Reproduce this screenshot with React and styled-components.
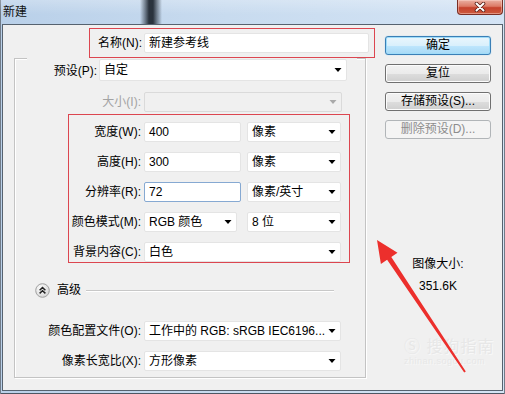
import React from 'react';
import styled, { createGlobalStyle, css } from 'styled-components';

const FONT = `"Liberation Sans", "Noto Sans CJK SC", sans-serif`;

const Global = createGlobalStyle`
  html, body { margin: 0; padding: 0; background: #c9dcf0; }
  #root { width: 505px; height: 394px; overflow: hidden; }
  * { box-sizing: border-box; }
`;

const Window = styled.div`
  position: relative;
  width: 505px;
  height: 394px;
  display: flex;
  flex-direction: column;
  padding: 0 2px 3px 2px;
  background: linear-gradient(90deg, #b9d0e9 0%, #c8dbef 45%, #d4e4f5 100%);
  box-shadow: inset 1px 0 0 #707b88, inset -1px 0 0 #707b88, inset 0 -1px 0 #4d5763;
  font-family: ${FONT};
  font-size: 12px;
  color: #000;
`;

const TitleBar = styled.div`
  height: 24px;
  margin: 0 -2px;
  padding: 0 2px 0 3px;
  display: flex;
  align-items: flex-start;
  justify-content: space-between;
  background:
    linear-gradient(90deg, transparent 140px, rgba(45, 55, 66, 0.55) 145px, #2a333d 149px, #2a333d 153px, rgba(45, 55, 66, 0.55) 157px, transparent 162px),
    linear-gradient(180deg, rgba(255, 255, 255, 0.25), rgba(255, 255, 255, 0) 60%);
`;

const Title = styled.div`
  line-height: 24px;
  font-size: 12px;
  color: #111;
`;

const CloseButton = styled.div`
  width: 46px;
  height: 15px;
  display: flex;
  align-items: center;
  justify-content: center;
  border: 1px solid #7a2e24;
  border-top: none;
  border-radius: 0 0 4px 4px;
  background: linear-gradient(180deg, #eab0a2 0%, #dc7a66 45%, #c6422d 55%, #cc5a3e 100%);
  box-shadow: inset 0 0 0 1px rgba(255, 220, 210, 0.45);
`;

const Body = styled.div`
  flex: 1;
  display: flex;
  align-items: flex-start;
  border: 1px solid #56626f;
  background: #f0f0f0;
`;

const LeftCol = styled.div`
  width: 372px;
  display: flex;
  flex-direction: column;
`;

const HighlightBox = styled.div`
  border: 1px solid #dc4650;
`;

const NameBox = styled(HighlightBox)`
  margin: 3px 0 0 86px;
  width: 286px;
  height: 30px;
  display: flex;
  align-items: center;
`;

const Label = styled.div`
  width: ${(p) => p.$w}px;
  flex: none;
  text-align: right;
  white-space: nowrap;
  line-height: 20px;
  color: ${(p) => (p.$disabled ? '#a3a3a3' : '#000')};
`;

const fieldBase = css`
  height: ${(p) => p.$h || 20}px;
  width: ${(p) => p.$w}px;
  flex: none;
  background: ${(p) => (p.$disabled ? '#f0f0f0' : '#fff')};
  border: 1px solid ${(p) => (p.$focused ? '#86a9d2' : p.$disabled ? '#dadada' : '#e4e4e4')};
  border-radius: 2px;
  padding: 0 4px 0 4px;
  line-height: ${(p) => (p.$h || 20) - 2}px;
  white-space: nowrap;
`;

const Input = styled.div`
  ${fieldBase}
  margin-left: ${(p) => p.$ml || 0}px;
`;

const SelectBox = styled.div`
  ${fieldBase}
  display: flex;
  align-items: center;
  justify-content: space-between;
`;

const Caret = styled.svg`
  flex: none;
`;

const Select = ({ children, w, h, disabled }) => (
  <SelectBox $w={w} $h={h} $disabled={disabled}>
    <span>{children}</span>
    <Caret width="8" height="4" viewBox="0 0 8 4">
      <polygon points="0.5,0 7.5,0 4,4" fill={disabled ? '#a9a9a9' : '#000'} />
    </Caret>
  </SelectBox>
);

const GroupBox = styled.div`
  margin-left: 11px;
  width: 352px;
  height: 320px;
  display: flex;
  flex-direction: column;
  border: 1px solid #c3c3c3;
  box-shadow: inset 1px 1px 0 #fff, 1px 1px 0 #fff;
`;

const PresetRow = styled.div`
  margin: -1px 0 0 12px;
  width: 330px;
  height: 23px;
  display: flex;
  align-items: flex-end;
  gap: 2px;
  background: #f0f0f0;
`;

const Row = styled.div`
  display: flex;
  align-items: center;
  gap: 3px;
  margin-top: ${(p) => p.$mt || 0}px;
`;

const ParamBox = styled(HighlightBox)`
  margin: 2px 0 0 53px;
  width: 282px;
  height: 149px;
  padding-top: 7px;
  display: flex;
  flex-direction: column;
  gap: 10px;
`;

const Pair = styled.div`
  display: flex;
  gap: ${(p) => p.$gap || 6}px;
`;

const AdvancedRow = styled.div`
  margin-top: 20px;
  height: 15px;
  padding-left: 20px;
  padding-right: 31px;
  display: flex;
  align-items: center;
`;

const AdvancedText = styled.span`
  margin-left: 7px;
  line-height: 15px;
`;

const Rule = styled.div`
  flex: 1;
  margin-left: 5px;
  height: 2px;
  border-top: 1px solid #c8c8c8;
  border-bottom: 1px solid #fff;
`;

const RightCol = styled.div`
  margin-left: 10px;
  width: 106px;
  padding-top: 11px;
  display: flex;
  flex-direction: column;
  gap: 9px;
`;

const Button = styled.div`
  height: 19px;
  border-radius: 3px;
  text-align: center;
  line-height: 17px;
  white-space: nowrap;
  ${(p) =>
    p.$variant === 'default'
      ? css`
          border: 1px solid #3a7fb6;
          background: linear-gradient(180deg, #eaf6fd 0%, #d9f0fc 50%, #bee6fd 52%, #a7d9f5 100%);
          box-shadow: inset 0 0 0 1px #9fdcf9, 0 0 1px #6fc2ee;
        `
      : p.$variant === 'disabled'
      ? css`
          border: 1px solid #b1b5b8;
          background: #f4f4f4;
          color: #8d8d8d;
        `
      : css`
          border: 1px solid #707070;
          background: linear-gradient(180deg, #f2f2f2 0%, #ebebeb 50%, #dddddd 52%, #cfcfcf 100%);
          box-shadow: inset 0 0 0 1px #fcfcfc;
        `}
`;

const SizeTitle = styled.div`
  margin-top: 109px;
  text-align: center;
  line-height: 14px;
`;

const SizeValue = styled.div`
  margin-top: -1px;
  text-align: center;
  line-height: 14px;
`;

const ArrowOverlay = styled.svg`
  position: absolute;
  left: 0;
  top: 0;
  pointer-events: none;
`;

const Watermark = styled.div`
  position: absolute;
  left: 404px;
  top: 338px;
  display: flex;
  flex-direction: column;
  align-items: flex-start;
  color: #e7e7e7;
  text-shadow: 1px 1px 0 #f8f8f8;
  pointer-events: none;
`;

const WatermarkMain = styled.div`
  font-size: 16px;
  line-height: 18px;
  letter-spacing: 1px;
`;

const WatermarkSub = styled.div`
  font-size: 9px;
  line-height: 10px;
  letter-spacing: 0.5px;
`;

const AdvancedIcon = () => (
  <svg width="15" height="15" viewBox="0 0 15 15">
    <defs>
      <radialGradient id="advg" cx="0.4" cy="0.35" r="0.7">
        <stop offset="0" stopColor="#ffffff" />
        <stop offset="1" stopColor="#d4d4d4" />
      </radialGradient>
    </defs>
    <circle cx="7.5" cy="7.5" r="6.8" fill="url(#advg)" stroke="#a0a0a0" strokeWidth="1" />
    <path d="M4.6 7.2 L7.5 4.6 L10.4 7.2 M4.6 10.4 L7.5 7.8 L10.4 10.4" fill="none" stroke="#222" strokeWidth="1.5" />
  </svg>
);

export default function App() {
  return (
    <>
      <Global />
      <Window>
        <TitleBar>
          <Title>新建</Title>
          <CloseButton>
            <svg width="14" height="10" viewBox="0 0 14 10">
              <path d="M3.5 1.5 L10.5 8.5 M10.5 1.5 L3.5 8.5" stroke="#5a1f17" strokeWidth="3.6" strokeLinecap="round" />
              <path d="M3.5 1.5 L10.5 8.5 M10.5 1.5 L3.5 8.5" stroke="#fff" strokeWidth="2" strokeLinecap="round" />
            </svg>
          </CloseButton>
        </TitleBar>
        <Body>
          <LeftCol>
            <NameBox>
              <Label $w={52}>名称(N):</Label>
              <Input $w={225} $ml={2}>新建参考线</Input>
            </NameBox>
            <GroupBox>
              <PresetRow>
                <Label $w={70}>预设(P):</Label>
                <Select w={248} h={22}>自定</Select>
              </PresetRow>
              <Row $mt={11}>
                <Label $w={126} $disabled>大小(I):</Label>
                <Select w={198} disabled>{''}</Select>
              </Row>
              <ParamBox>
                <Row>
                  <Label $w={72}>宽度(W):</Label>
                  <Pair>
                    <Input $w={97}>400</Input>
                    <Select w={94}>像素</Select>
                  </Pair>
                </Row>
                <Row>
                  <Label $w={72}>高度(H):</Label>
                  <Pair>
                    <Input $w={97}>300</Input>
                    <Select w={94}>像素</Select>
                  </Pair>
                </Row>
                <Row>
                  <Label $w={72}>分辨率(R):</Label>
                  <Pair>
                    <Input $w={97} $focused>72</Input>
                    <Select w={94}>像素/英寸</Select>
                  </Pair>
                </Row>
                <Row>
                  <Label $w={72}>颜色模式(M):</Label>
                  <Pair $gap={10}>
                    <Select w={93}>RGB 颜色</Select>
                    <Select w={94}>8 位</Select>
                  </Pair>
                </Row>
                <Row>
                  <Label $w={72}>背景内容(C):</Label>
                  <Select w={197}>白色</Select>
                </Row>
              </ParamBox>
              <AdvancedRow>
                <AdvancedIcon />
                <AdvancedText>高级</AdvancedText>
                <Rule />
              </AdvancedRow>
              <Row $mt={23}>
                <Label $w={126}>颜色配置文件(O):</Label>
                <Select w={197}>工作中的 RGB: sRGB IEC6196...</Select>
              </Row>
              <Row $mt={10}>
                <Label $w={126}>像素长宽比(X):</Label>
                <Select w={197}>方形像素</Select>
              </Row>
            </GroupBox>
          </LeftCol>
          <RightCol>
            <Button $variant="default">确定</Button>
            <Button>复位</Button>
            <Button>存储预设(S)...</Button>
            <Button $variant="disabled">删除预设(D)...</Button>
            <SizeTitle>图像大小:</SizeTitle>
            <SizeValue>351.6K</SizeValue>
          </RightCol>
        </Body>
        <Watermark>
          <WatermarkMain>Ⓢ 搜狗指南</WatermarkMain>
          <WatermarkSub>zhinan.sogou.com</WatermarkSub>
        </Watermark>
        <ArrowOverlay width="505" height="394" viewBox="0 0 505 394">
          <polygon
            points="377,240 397.5,252.8 391.3,256.9 465.8,371.5 464.2,372.5 387.1,259.7 380.9,263.9"
            fill="#ec2f2c"
          />
        </ArrowOverlay>
      </Window>
    </>
  );
}
